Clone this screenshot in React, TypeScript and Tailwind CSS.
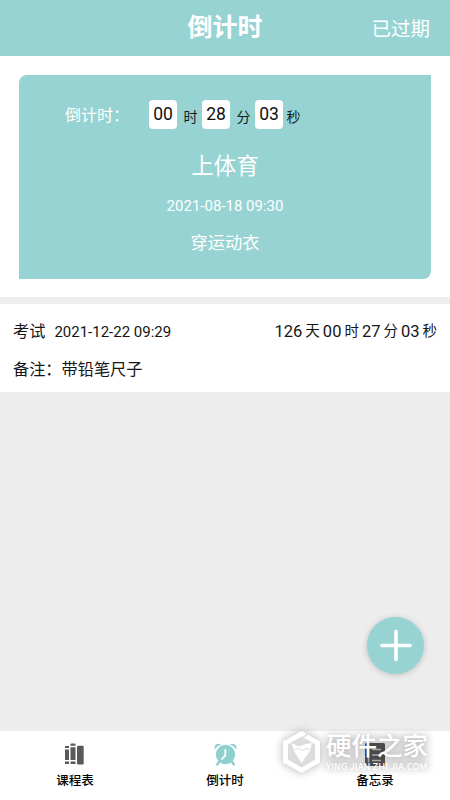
import type { ReactNode } from "react"

function DigitBox({ children }: { children: ReactNode }) {
  return (
    <span className="flex h-[29px] w-7 items-center justify-center rounded bg-white text-[17.5px] text-[#111]">
      {children}
    </span>
  )
}

function Unit({ children }: { children: ReactNode }) {
  return <span className="w-[25px] pt-[5px] pl-[2px] text-center text-sm leading-6 text-[#151b1b]">{children}</span>
}

function BooksIcon() {
  return (
    <svg width="19" height="22" viewBox="0 0 19 22" fill="#595959" className="mr-px">
      <path d="M0 3h4v2H0zM0 6.5h4V17H0zM0 18.5h4V21H0zM5.5 1.2Q5.5.4 6.5.4h3q1 0 1 .8v1.6h-5zM5.5 4.3h5V17h-5zM5.5 18.5h5V21h-5z" />
      <rect x="12" y="2.8" width="6.7" height="18.7" rx="1.2" />
    </svg>
  )
}

function AlarmIcon() {
  return (
    <svg width="23" height="23" viewBox="0 0 23 23" fill="#8fd0ce">
      <path d="M.9 6.4C-.8 2.3 3.5-1 7.3 1.5Q3.2 2.8.9 6.4ZM22.1 6.4c1.7-4.1-2.6-7.4-6.4-4.9q4.1 1.3 6.4 4.9Z" />
      <path d="m5.5 18-2.2 3.4M17.5 18l2.2 3.4" stroke="#8fd0ce" strokeWidth="2.6" strokeLinecap="round" />
      <circle cx="11.5" cy="11.5" r="9.7" />
      <path d="M11.3 6.8v5.6l-3.3 3.6" fill="none" stroke="#fff" strokeWidth="1.8" strokeLinecap="round" />
    </svg>
  )
}

function MemoIcon() {
  return (
    <svg width="20" height="23" viewBox="0 0 20 23">
      <rect width="20" height="23" rx="1.5" fill="#595959" />
      <path d="M3.5 3.5v16M7 6.5h9M7 12h9M7 17.5h9" stroke="#c8c8c8" strokeWidth="1.6" />
    </svg>
  )
}

const tabs = [
  { label: "课程表", icon: <BooksIcon /> },
  { label: "倒计时", icon: <AlarmIcon /> },
  { label: "备忘录", icon: <MemoIcon /> },
]

const remaining = [
  { value: "126", unit: "天" },
  { value: "00", unit: "时" },
  { value: "27", unit: "分" },
  { value: "03", unit: "秒" },
]

function Watermark() {
  return (
    <div className="pointer-events-none absolute top-[730px] left-[282px] flex text-white">
      {/* soft haze under the wordmark */}
      <div className="absolute top-[5px] left-[44px] h-[34px] w-[102px] bg-black/15 blur-[4px]" />
      <svg
        width="39"
        height="44"
        viewBox="0 0 39 44"
        className="drop-shadow-[0_0_5px_rgba(0,0,0,0.3)]"
      >
        <path d="M19.5 1 38 11.5v21L19.5 43 1 32.5v-21Z" fill="#fff" />
        <path d="m19.5 6.5 13.5 7.8v15.500L19.500 37.500 6 29.800V14.300Z" fill="#dcdcdc" />
        <path d="m9.500 13 7 3.500L24 14l6-1-2 8-8.500 12L12 21Z" fill="#fff" />
        <path d="m12 19.500 4-1 4 2 4-2 4 1" fill="none" stroke="#dcdcdc" strokeWidth="1" />
        <path d="m20 8 6-4" stroke="#dcdcdc" strokeWidth="1.5" />
      </svg>
      <div className="relative ml-[5px] whitespace-nowrap [text-shadow:0_0_5px_rgba(0,0,0,0.15)]">
        <div className="mt-[3px] h-[27px] text-[25.5px] leading-[26px] font-medium">硬件之家</div>
        <div className="font-['Noto_Sans_CJK_SC'] text-[9.4px] leading-[12px] font-medium">
          YING JIAN ZHI JIA.COM
        </div>
      </div>
    </div>
  )
}

export default function App() {
  return (
    <div className="relative flex h-[800px] w-[450px] flex-col overflow-hidden bg-[#ededed] font-[Roboto,'Noto_Sans_CJK_SC',sans-serif] text-[#151515]">
      {/* Header */}
      <header className="grid h-[56px] shrink-0 grid-cols-3 bg-[#96d3d2] text-white">
        <h1 className="col-start-2 pt-[10px] text-center text-[25px] leading-9 font-bold">倒计时</h1>
        <button className="pt-[4px] pr-[20px] text-right text-[19.5px]">已过期</button>
      </header>

      {/* Next event */}
      <section className="h-[241px] shrink-0 bg-white px-[19px] pt-[19px]">
        <div className="h-[204px] w-[412px] rounded-tl-lg rounded-br-lg bg-[#96d3d2] pt-6 text-center text-white">
          <div className="flex h-[30px] items-center pl-[46px]">
            <span className="w-[84px] pt-[4px] text-left text-base">倒计时：</span>
            <DigitBox>00</DigitBox>
            <Unit>时</Unit>
            <DigitBox>28</DigitBox>
            <Unit>分</Unit>
            <DigitBox>03</DigitBox>
            <span className="w-[21px] pt-[5px] text-center text-sm leading-6 text-[#151b1b]">秒</span>
          </div>
          <p className="mt-[21px] text-[22.5px] leading-8">上体育</p>
          <p className="mt-3 text-[15px] leading-6">2021-08-18 09:30</p>
          <p className="mt-[13px] text-[17.3px] leading-6">穿运动衣</p>
        </div>
      </section>

      {/* Upcoming list */}
      <section className="mt-[7px] h-[88px] shrink-0 bg-white px-[13px] pt-[16px] text-[16.2px] leading-6">
        <div className="flex items-center justify-between">
          <div className="flex items-center">
            <span>考试</span>
            <span className="ml-[9px] text-[15px]">2021-12-22 09:29</span>
          </div>
          <div className="-mt-px flex gap-[3px] text-[16.5px]">
            {remaining.map((part) => (
              <span key={part.unit} className="flex gap-[3px]">
                <span>{part.value}</span>
                <span className="text-[14.5px] leading-6">{part.unit}</span>
              </span>
            ))}
          </div>
        </div>
        <p className="mt-[14px]">备注：带铅笔尺子</p>
      </section>

      <div className="flex flex-1 items-end justify-end pr-[26px] pb-[57px]">
        <button className="flex size-[57px] items-center justify-center rounded-full bg-[#96d3d2] shadow-[0_1px_6px_rgba(0,0,0,0.2)]">
          <svg width="32" height="32" viewBox="0 0 32 32" stroke="#fff" strokeWidth="3.6" strokeLinecap="round">
            <path d="M2 15.5h28M16 1.5v28" />
          </svg>
        </button>
      </div>

      {/* Bottom tabs */}
      <nav className="grid h-[69px] shrink-0 grid-cols-3 bg-white">
        {tabs.map((tab) => (
          <div key={tab.label} className="flex flex-col items-center pt-[11px]">
            <div className="flex h-6 items-center">{tab.icon}</div>
            <span className="mt-[6px] text-[12.5px] leading-[18px] font-medium text-black">{tab.label}</span>
          </div>
        ))}
      </nav>
      <Watermark />
    </div>
  )
}
